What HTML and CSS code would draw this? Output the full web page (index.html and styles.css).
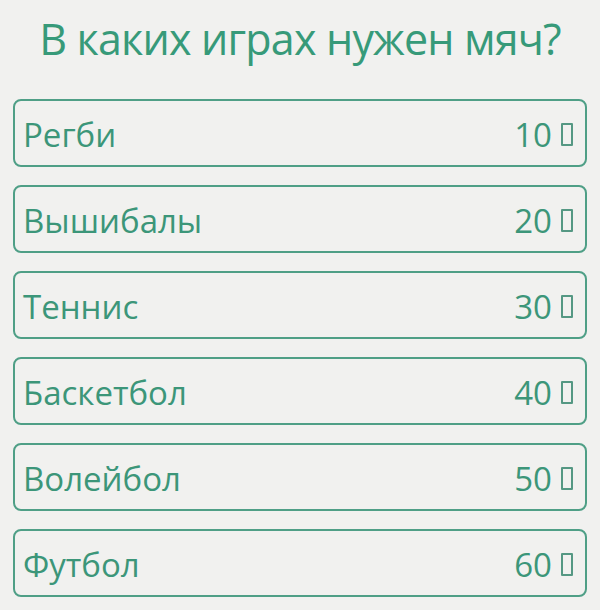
FILE: index.html
```html
<!DOCTYPE html>
<html lang="ru">
<head>
    <meta charset="UTF-8">
    <meta name="viewport" content="width=device-width, initial-scale=1.0">
    <title>В каких играх нужен мяч?</title>
    <link rel="stylesheet" href="styles.css">
</head>
<body>
    <div class="quiz">
        <h1 class="question">В каких играх нужен мяч?</h1>

        <div class="answers">
            <div class="answer"><span class="answer-text">Регби</span><span class="points">10 <i class="coin"></i></span></div>
            <div class="answer"><span class="answer-text">Вышибалы</span><span class="points">20 <i class="coin"></i></span></div>
            <div class="answer"><span class="answer-text">Теннис</span><span class="points">30 <i class="coin"></i></span></div>
            <div class="answer"><span class="answer-text">Баскетбол</span><span class="points">40 <i class="coin"></i></span></div>
            <div class="answer"><span class="answer-text">Волейбол</span><span class="points">50 <i class="coin"></i></span></div>
            <div class="answer"><span class="answer-text">Футбол</span><span class="points">60 <i class="coin"></i></span></div>
        </div>
    </div>
</body>
</html>
```

FILE: styles.css
```css
body {
    margin: 0;
    background-color: #f1f1ef;
    font-family: "Open Sans", "Noto Sans", sans-serif;
    color: #3c9679;
}
.quiz {
    width: 600px;
    height: 610px;
    padding: 0 13px;
    box-sizing: border-box;
}
.question {
    margin: 0;
    height: 99px;
    padding-top: 9px;
    box-sizing: border-box;
    text-align: center;
    white-space: nowrap;
    font-size: 43px;
    font-weight: normal;
    letter-spacing: -0.8px;
    line-height: 60px;
    color: #379a79;
}
.answers {
    display: flex;
    flex-direction: column;
    gap: 18px;
}
.answer {
    display: flex;
    align-items: center;
    justify-content: space-between;
    height: 68px;
    padding: 2px 12px 0 8px;
    border: 2px solid #4f9f86;
    border-radius: 8px;
    box-sizing: border-box;
    font-size: 33px;
}
.points {
    display: flex;
    align-items: center;
    gap: 9px;
}
.coin {
    display: inline-block;
    width: 8px;
    height: 19px;
    border: 2px solid #559883;
    border-radius: 1px;
}
```
